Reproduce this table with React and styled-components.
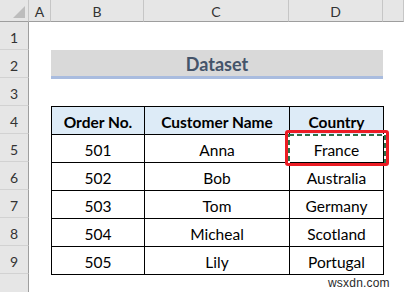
import React from "react";
import styled, { createGlobalStyle } from "styled-components";

const GlobalStyle = createGlobalStyle`
  html, body {
    margin: 0;
    padding: 0;
    background: #ffffff;
    overflow: hidden;
  }
  body {
    font-family: Lato, "Open Sans", sans-serif;
  }
`;

const Sheet = styled.div`
  position: relative;
  width: 404px;
  height: 292px;
  display: grid;
  grid-template-columns: 29px 22px 93px 145px 94px 21px;
  grid-template-rows: 22px repeat(10, 28px);
  overflow: hidden;
`;

const Corner = styled.div`
  grid-column: 1;
  grid-row: 1;
  background: #e6e6e6;
  border-right: 1px solid #c6c6c6;
  border-bottom: 1px solid #9e9e9e;
  box-sizing: border-box;
  position: relative;

  &::after {
    content: "";
    position: absolute;
    right: 3px;
    bottom: 3px;
    width: 0;
    height: 0;
    border-left: 12px solid transparent;
    border-bottom: 12px solid #bdbdbd;
  }
`;

const ColHeader = styled.div`
  grid-row: 1;
  background: #e6e6e6;
  border-right: 1px solid #c6c6c6;
  border-bottom: 1px solid #9e9e9e;
  box-sizing: border-box;
  display: flex;
  align-items: center;
  justify-content: center;
  font-size: 14px;
  color: #333333;
  padding-top: 1px;
`;

const RowHeader = styled.div`
  grid-column: 1;
  background: #e6e6e6;
  border-right: 1px solid #9e9e9e;
  border-bottom: 1px solid #d2d2d2;
  box-sizing: border-box;
  display: flex;
  align-items: center;
  justify-content: center;
  font-size: 14px;
  color: #333333;
  padding-top: 3px;
`;

const TitleBar = styled.div`
  grid-column: 3 / 6;
  grid-row: 3;
  align-self: start;
  height: 29px;
  box-sizing: border-box;
  background: #d9d9d9;
  border-bottom: 3px solid #a9bcdf;
  display: flex;
  align-items: center;
  justify-content: center;
  font-size: 18px;
  font-weight: 700;
  color: #44546a;
  padding-top: 2px;
`;

const DataTable = styled.div`
  grid-column: 3 / 6;
  grid-row: 5 / 11;
  align-self: start;
  justify-self: start;
  display: grid;
  grid-template-columns: 93px 145px 94px;
  grid-auto-rows: 28px;
  border-right: 1px solid #000000;
  border-bottom: 1px solid #000000;
`;

const Cell = styled.div`
  position: relative;
  box-sizing: border-box;
  border-left: 1px solid #000000;
  border-top: 1px solid #000000;
  display: flex;
  align-items: center;
  justify-content: center;
  padding-top: 2px;
  font-size: 15.5px;
  font-weight: ${(p) => (p.$head ? 700 : 400)};
  background: ${(p) => (p.$head ? "#ddebf7" : "#ffffff")};
  color: #000000;
  z-index: ${(p) => (p.$active ? 2 : "auto")};
`;

const Marquee = styled.svg`
  position: absolute;
  left: -2px;
  top: -1px;
  width: 98px;
  height: 31px;
  overflow: visible;
  z-index: 1;
`;

const Label = styled.span`
  position: relative;
  z-index: 2;
`;

const Highlight = styled.div`
  position: absolute;
  left: -5px;
  right: -6px;
  top: -5px;
  bottom: -4px;
  border: 3.5px solid #ec1c24;
  border-radius: 3px;
  z-index: 3;
`;

const Watermark = styled.div`
  position: absolute;
  left: 328px;
  top: 276px;
  font-family: "Liberation Sans", Arial, sans-serif;
  font-size: 12px;
  color: #2a2a2a;
  letter-spacing: 0.2px;
`;

const columns = ["A", "B", "C", "D", ""];

const rows = [
  ["501", "Anna", "France"],
  ["502", "Bob", "Australia"],
  ["503", "Tom", "Germany"],
  ["504", "Micheal", "Scotland"],
  ["505", "Lily", "Portugal"],
];

function CopyMarquee() {
  return (
    <Marquee viewBox="0 0 98 31">
      <rect x="1" y="1" width="96" height="29" fill="none" stroke="#ffffff" strokeWidth="2" />
      <rect
        x="1"
        y="1"
        width="96"
        height="29"
        fill="none"
        stroke="#2f6f47"
        strokeWidth="2"
        strokeDasharray="5 3"
      />
    </Marquee>
  );
}

export default function App() {
  return (
    <>
      <GlobalStyle />
      <Sheet>
        <Corner />
        {columns.map((c, i) => (
          <ColHeader key={i} style={{ gridColumn: i + 2 }}>
            {c}
          </ColHeader>
        ))}
        {Array.from({ length: 10 }, (_, i) => (
          <RowHeader key={i} style={{ gridRow: i + 2 }}>
            {i < 9 ? i + 1 : ""}
          </RowHeader>
        ))}

        <TitleBar>Dataset</TitleBar>

        <DataTable>
          <Cell $head>Order No.</Cell>
          <Cell $head>Customer Name</Cell>
          <Cell $head>Country</Cell>
          {rows.map((r, i) => (
            <React.Fragment key={r[0]}>
              <Cell>{r[0]}</Cell>
              <Cell>{r[1]}</Cell>
              <Cell $active={i === 0}>
                {i === 0 && <CopyMarquee />}
                <Label>{r[2]}</Label>
                {i === 0 && <Highlight />}
              </Cell>
            </React.Fragment>
          ))}
        </DataTable>

        <Watermark>wsxdn.com</Watermark>
      </Sheet>
    </>
  );
}
